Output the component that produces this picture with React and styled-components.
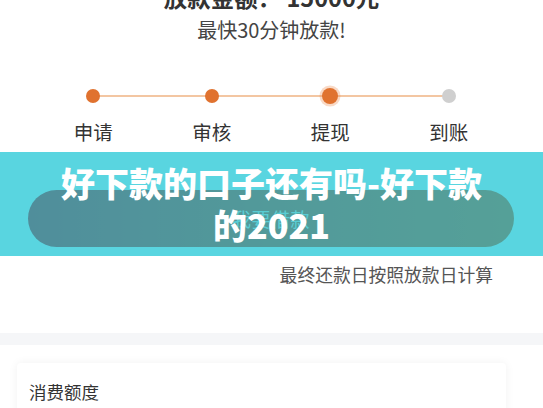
import React from "react";
import styled, { createGlobalStyle } from "styled-components";

const Global = createGlobalStyle`
  html, body { margin: 0; padding: 0; background: #ffffff; }
  body { font-family: "Noto Sans CJK SC", "Noto Sans", sans-serif; overflow: hidden; }
`;

const Page = styled.div`
  width: 543px;
  height: 408px;
  overflow: hidden;
  display: flex;
  flex-direction: column;
  background: #ffffff;
  & > * { flex-shrink: 0; }
`;

const Header = styled.header`
  display: flex;
  flex-direction: column;
  align-items: center;
  margin-top: -16px;
`;

const Amount = styled.h1`
  margin: 0;
  font-size: 23.5px;
  line-height: 26px;
  font-weight: 700;
  color: #333333;
`;

const Hint = styled.p`
  margin: 7px 0 0;
  font-size: 20px;
  line-height: 26px;
  color: #444444;
`;

const Steps = styled.ol`
  list-style: none;
  margin: 43px 0 0;
  padding: 0 0 0 34px;
  display: grid;
  grid-template-columns: repeat(4, 118.5px);
`;

const Step = styled.li`
  position: relative;
  display: flex;
  flex-direction: column;
  align-items: center;
  &::before {
    content: "";
    display: ${(p) => (p.$last ? "none" : "block")};
    position: absolute;
    top: 9px;
    left: 50%;
    width: 118.5px;
    height: 2px;
    background: #f3c6a2;
  }
`;

const DotBox = styled.div`
  position: relative;
  z-index: 1;
  height: 20px;
  display: flex;
  align-items: center;
  justify-content: center;
`;

const Dot = styled.span`
  display: block;
  width: ${(p) => (p.$active ? 16 : 14)}px;
  height: ${(p) => (p.$active ? 16 : 14)}px;
  border-radius: 50%;
  background: ${(p) => (p.$done ? "#e0722f" : "#cfcfcf")};
  box-shadow: ${(p) =>
    p.$active ? "0 0 0 2.5px rgba(236, 140, 80, 0.32)" : "none"};
`;

const StepLabel = styled.span`
  margin-top: 13px;
  font-size: 19.5px;
  line-height: 26px;
  color: #333333;
`;

const Promo = styled.section`
  position: relative;
  margin-top: 45px;
  display: flex;
  flex-direction: column;
`;

const LoanButton = styled.button`
  margin: 0 0 0 28px;
  width: 486px;
  height: 57px;
  border: none;
  border-radius: 28.5px;
  background: linear-gradient(90deg, #e1121a 0%, #e73a16 50%, #f24e0f 100%);
  color: #ffe4d7;
  font-family: "Noto Sans CJK SC", "Noto Sans", sans-serif;
  font-size: 19px;
  letter-spacing: 0.5px;
  padding: 0;
`;

const Note = styled.p`
  margin: 15px 50px 0 0;
  align-self: flex-end;
  font-size: 17.8px;
  line-height: 24px;
  color: #555555;
`;

const Banner = styled.div`
  position: absolute;
  top: -38px;
  left: 0;
  width: 543px;
  height: 104px;
  background: rgba(18, 195, 211, 0.7);
  display: flex;
  align-items: center;
  justify-content: center;
`;

const BannerTitle = styled.h2`
  margin: 0;
  width: 440px;
  text-align: center;
  font-size: 34px;
  line-height: 42px;
  font-weight: 900;
  color: #ffffff;
`;

const Divider = styled.div`
  margin-top: 47px;
  height: 12px;
  background: #f5f6f8;
`;

const Card = styled.section`
  margin: 18px 0 0 17px;
  width: 489px;
  padding: 17px 12px 20px;
  box-sizing: border-box;
  background: #ffffff;
  border-radius: 4px;
  box-shadow: 0 0 10px rgba(0, 0, 0, 0.06);
`;

const CardTitle = styled.h3`
  margin: 0;
  font-size: 17.5px;
  line-height: 24px;
  font-weight: 400;
  color: #333333;
`;

const steps = [
  { label: "申请", done: true },
  { label: "审核", done: true },
  { label: "提现", done: true, active: true },
  { label: "到账", done: false },
];

export default function App() {
  return (
    <Page>
      <Global />
      <Header>
        <Amount>放款金额： 15000元</Amount>
        <Hint>最快30分钟放款!</Hint>
      </Header>
      <Steps>
        {steps.map((s, i) => (
          <Step key={s.label} $last={i === steps.length - 1}>
            <DotBox>
              <Dot $done={s.done} $active={s.active} />
            </DotBox>
            <StepLabel>{s.label}</StepLabel>
          </Step>
        ))}
      </Steps>
      <Promo>
        <LoanButton>我要借款</LoanButton>
        <Note>最终还款日按照放款日计算</Note>
        <Banner>
          <BannerTitle>好下款的口子还有吗-好下款的2021</BannerTitle>
        </Banner>
      </Promo>
      <Divider />
      <Card>
        <CardTitle>消费额度</CardTitle>
      </Card>
    </Page>
  );
}
